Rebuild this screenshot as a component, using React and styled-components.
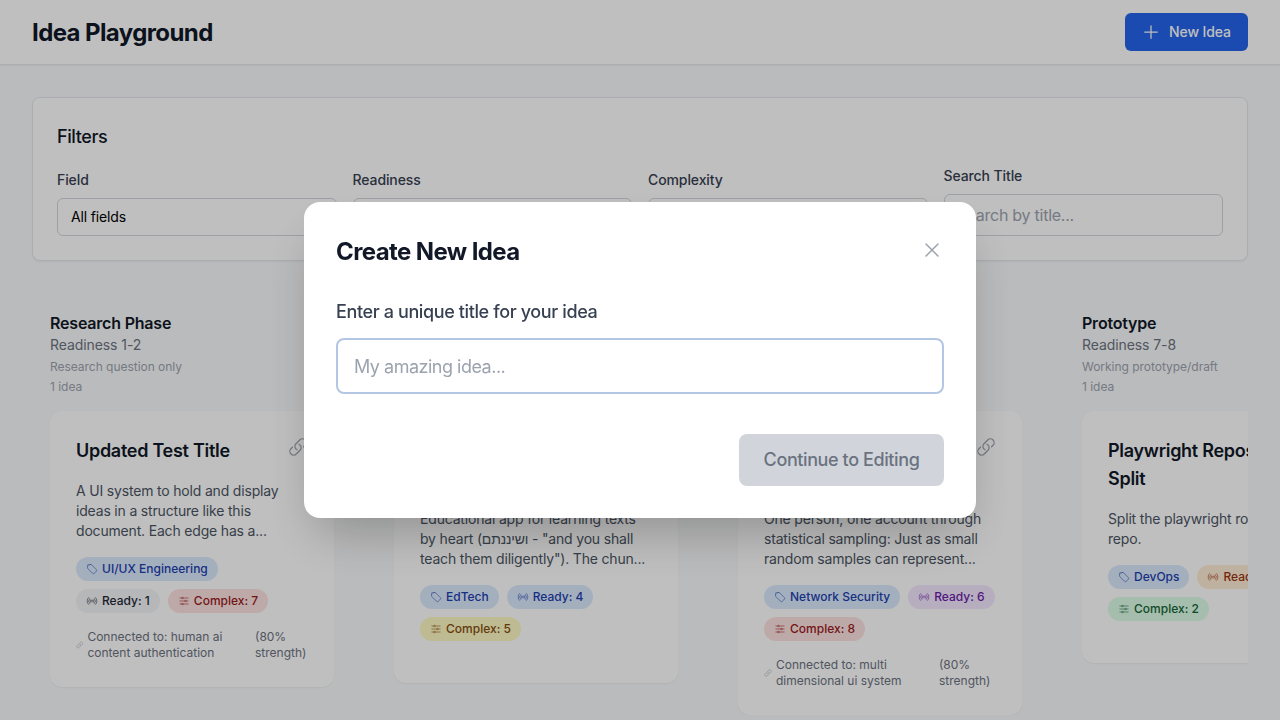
import React from 'react'
import styled, { createGlobalStyle } from 'styled-components'
import {
  HiOutlinePlus,
  HiOutlineXMark,
  HiOutlineLink,
  HiOutlineTag,
  HiOutlineSignal,
  HiOutlineAdjustmentsHorizontal,
} from 'react-icons/hi2'

const GlobalStyle = createGlobalStyle`
  * { box-sizing: border-box; }
  html, body { margin: 0; height: 100%; }
  body {
    background: #f9fafb;
    color: #111827;
    font-family: Inter, "Liberation Sans", sans-serif;
    overflow: hidden;
  }
`

const chipColors = {
  blue: ['#dbeafe', '#1e40af'],
  gray: ['#f3f4f6', '#1f2937'],
  red: ['#fee2e2', '#991b1b'],
  yellow: ['#fef9c3', '#854d0e'],
  purple: ['#f3e8ff', '#6b21a8'],
  orange: ['#ffedd5', '#9a3412'],
  green: ['#dcfce7', '#166534'],
}

const Header = styled.header`
  height: 65px;
  padding: 0 32px;
  display: flex;
  align-items: center;
  justify-content: space-between;
  background: #fff;
  border-bottom: 1px solid #e5e7eb;
  box-shadow: 0 1px 2px rgba(0, 0, 0, 0.05);
`
const AppTitle = styled.h1`
  margin: 0;
  padding-top: 2px;
  font-size: 24px;
  line-height: 32px;
  font-weight: 700;
  letter-spacing: -0.6px;
  color: #111827;
`
const NewButton = styled.button`
  width: 123px;
  height: 38px;
  padding: 0 16px;
  display: flex;
  align-items: center;
  gap: 8px;
  border: 0;
  border-radius: 6px;
  background: #2563eb;
  color: #fff;
  font: 500 14px/20px Inter, sans-serif;
  letter-spacing: -0.1px;
`
const Main = styled.main`
  padding: 32px 32px 0;
`
const FilterCard = styled.section`
  padding: 24px;
  background: #fff;
  border: 1px solid #e5e7eb;
  border-radius: 8px;
  box-shadow: 0 1px 2px rgba(0, 0, 0, 0.05);
`
const FilterTitle = styled.h2`
  margin: 0 0 15px;
  padding-top: 1px;
  font-size: 18px;
  line-height: 28px;
  font-weight: 500;
  letter-spacing: -0.4px;
  color: #111827;
`
const FilterGrid = styled.div`
  display: grid;
  grid-template-columns: repeat(4, 1fr);
  gap: 16px;
  align-items: end;
`
const FieldLabel = styled.label`
  display: block;
  margin-bottom: 8px;
  font-size: 14px;
  line-height: 20px;
  font-weight: 500;
  letter-spacing: -0.1px;
  color: #374151;
`
const Select = styled.select`
  display: block;
  width: 100%;
  height: 38px;
  padding: 0 13px;
  appearance: none;
  background: #fff;
  border: 1px solid #d1d5db;
  border-radius: 6px;
  color: #000;
  font: 400 14px/20px Inter, sans-serif;
  letter-spacing: -0.15px;
`
const SearchInput = styled.input`
  display: block;
  width: 100%;
  height: 42px;
  padding: 0 12px;
  background: #fff;
  border: 1px solid #d1d5db;
  border-radius: 6px;
  font: 400 16px/24px Inter, sans-serif;
  letter-spacing: -0.25px;
  &::placeholder { color: #9ca3af; opacity: 1; }
`
const Board = styled.div`
  display: flex;
  align-items: flex-start;
  gap: 60px;
  margin-top: 32px;
  padding: 18px 0 0 18px;
  overflow: hidden;
`
const Column = styled.div`
  flex: 0 0 284px;
`
const ColumnHead = styled.div`
  margin-bottom: 16px;
`
const ColumnTitle = styled.h3`
  margin: 0;
  font-size: 16px;
  line-height: 24px;
  font-weight: 600;
  letter-spacing: -0.2px;
  color: #111827;
`
const ColumnRange = styled.div`
  font-size: 14px;
  line-height: 20px;
  letter-spacing: -0.08px;
  color: #6b7280;
`
const ColumnNote = styled.div`
  margin-top: 4px;
  font-size: 12px;
  line-height: 16px;
  letter-spacing: -0.03px;
  color: #9ca3af;
`
const Card = styled.article`
  padding: 26px;
  background: #fff;
  border-radius: 12px;
  box-shadow: 0 1px 2px rgba(0, 0, 0, 0.05);
`
const CardTop = styled.div`
  display: flex;
  justify-content: space-between;
  align-items: flex-start;
  gap: 8px;
  margin-bottom: 16px;
`
const CardTitle = styled.h4`
  margin: 0;
  font-size: 18px;
  line-height: 28px;
  font-weight: 600;
  letter-spacing: -0.28px;
  color: #111827;
`
const CardLink = styled(HiOutlineLink)`
  flex: 0 0 20px;
  width: 20px;
  height: 20px;
  color: #9ca3af;
`
const CardText = styled.p`
  margin: 0 0 16px;
  font-size: 14px;
  line-height: 20px;
  letter-spacing: -0.18px;
  color: #4b5563;
`
const Chips = styled.div`
  display: flex;
  flex-wrap: wrap;
  gap: 8px;
  margin-bottom: 16px;
`
const Chip = styled.span`
  display: inline-flex;
  align-items: center;
  gap: 4px;
  height: 24px;
  padding: 0 10px;
  border-radius: 999px;
  background: ${props => chipColors[props.$tone][0]};
  color: ${props => chipColors[props.$tone][1]};
  font-size: 12px;
  line-height: 16px;
  font-weight: 500;
  white-space: nowrap;
  svg { width: 12px; height: 12px; flex: none; opacity: 0.7; }
`
const Connection = styled.div`
  display: flex;
  align-items: center;
  gap: 4px;
  font-size: 12px;
  line-height: 16px;
  color: #6b7280;
  svg { width: 12px; height: 12px; color: #9ca3af; }
`
const Overlay = styled.div`
  position: fixed;
  inset: 0;
  display: flex;
  align-items: center;
  justify-content: center;
  background: rgba(0, 0, 0, 0.25);
`
const Modal = styled.div`
  width: 672px;
  height: 316px;
  padding: 32px;
  background: #fff;
  border-radius: 16px;
  box-shadow: 0 25px 50px -12px rgba(0, 0, 0, 0.25);
`
const ModalHead = styled.div`
  display: flex;
  align-items: flex-start;
  justify-content: space-between;
  margin-bottom: 30px;
`
const ModalTitle = styled.h2`
  margin: 0;
  padding-top: 2px;
  font-size: 24px;
  line-height: 32px;
  font-weight: 700;
  letter-spacing: -0.6px;
  color: #111827;
`
const CloseButton = styled.button`
  display: flex;
  margin-top: 4px;
  padding: 0;
  border: 0;
  background: none;
  color: #9ca3af;
  svg { width: 24px; height: 24px; }
`
const ModalLabel = styled.label`
  display: block;
  margin-bottom: 12px;
  font-size: 18px;
  line-height: 28px;
  font-weight: 500;
  letter-spacing: -0.38px;
  color: #374151;
`
const TitleInput = styled.input`
  display: block;
  width: 100%;
  height: 56px;
  padding: 0 16px;
  border: 2px solid #b3c6e4;
  border-radius: 8px;
  background: #fff;
  outline: none;
  font: 400 18px/28px Inter, sans-serif;
  letter-spacing: -0.5px;
  &::placeholder { color: #9ca3af; opacity: 1; }
`
const ModalFoot = styled.div`
  display: flex;
  justify-content: flex-end;
  margin-top: 40px;
`
const ContinueButton = styled.button`
  width: 205px;
  height: 52px;
  padding: 0;
  border: 0;
  border-radius: 8px;
  background: #d1d5db;
  color: #6b7280;
  font: 500 18px/28px Inter, sans-serif;
  letter-spacing: -0.4px;
`

const columns = [
  {
    title: 'Research Phase', range: 'Readiness 1-2', note: 'Research question only',
    card: {
      title: 'Updated Test Title',
      text: 'A UI system to hold and display ideas in a structure like this document. Each edge has a...',
      field: 'UI/UX Engineering', ready: ['gray', 1], complex: ['red', 7],
      connection: 'human ai content authentication',
    },
  },
  {
    title: 'Concept Draft', range: 'Readiness 3-4', note: 'Outline and rough notes',
    card: {
      title: 'Shinantam: Memorize Texts by Heart',
      text: 'Educational app for learning texts by heart (ושיננתם - "and you shall teach them diligently"). The chun...',
      field: 'EdTech', ready: ['blue', 4], complex: ['yellow', 5],
    },
  },
  {
    title: 'Development', range: 'Readiness 5-6', note: 'Detailed design in progress',
    card: {
      title: 'Fair Voting Through Random Sampling',
      text: 'One person, one account through statistical sampling: Just as small random samples can represent...',
      field: 'Network Security', ready: ['purple', 6], complex: ['red', 8],
      connection: 'multi dimensional ui system',
    },
  },
  {
    title: 'Prototype', range: 'Readiness 7-8', note: 'Working prototype/draft',
    card: {
      title: 'Playwright Repository Split',
      text: 'Split the playwright roles to own repo.',
      field: 'DevOps', ready: ['orange', 7], complex: ['green', 2],
    },
  },
]

const IdeaCard = ({ card }) => (
  <Card>
    <CardTop>
      <CardTitle>{card.title}</CardTitle>
      <CardLink />
    </CardTop>
    <CardText>{card.text}</CardText>
    <Chips>
      <Chip $tone="blue"><HiOutlineTag />{card.field}</Chip>
      <Chip $tone={card.ready[0]}><HiOutlineSignal />Ready: {card.ready[1]}</Chip>
      <Chip $tone={card.complex[0]}><HiOutlineAdjustmentsHorizontal />Complex: {card.complex[1]}</Chip>
    </Chips>
    {card.connection && (
      <Connection>
        <HiOutlineLink />
        <span>Connected to: {card.connection}</span>
        <span>(80% strength)</span>
      </Connection>
    )}
  </Card>
)

export default function App() {
  return (
    <>
      <GlobalStyle />
      <Header>
        <AppTitle>Idea Playground</AppTitle>
        <NewButton><HiOutlinePlus size={20} />New Idea</NewButton>
      </Header>
      <Main>
        <FilterCard>
          <FilterTitle>Filters</FilterTitle>
          <FilterGrid>
            <div>
              <FieldLabel>Field</FieldLabel>
              <Select><option>All fields</option></Select>
            </div>
            <div>
              <FieldLabel>Readiness</FieldLabel>
              <Select><option>All levels</option></Select>
            </div>
            <div>
              <FieldLabel>Complexity</FieldLabel>
              <Select><option>All levels</option></Select>
            </div>
            <div>
              <FieldLabel>Search Title</FieldLabel>
              <SearchInput placeholder="Search by title..." />
            </div>
          </FilterGrid>
        </FilterCard>
        <Board>
          {columns.map(column => (
            <Column key={column.title}>
              <ColumnHead>
                <ColumnTitle>{column.title}</ColumnTitle>
                <ColumnRange>{column.range}</ColumnRange>
                <ColumnNote>{column.note}</ColumnNote>
                <ColumnNote>1 idea</ColumnNote>
              </ColumnHead>
              <IdeaCard card={column.card} />
            </Column>
          ))}
        </Board>
      </Main>
      <Overlay>
        <Modal>
          <ModalHead>
            <ModalTitle>Create New Idea</ModalTitle>
            <CloseButton><HiOutlineXMark /></CloseButton>
          </ModalHead>
          <ModalLabel>Enter a unique title for your idea</ModalLabel>
          <TitleInput placeholder="My amazing idea..." />
          <ModalFoot>
            <ContinueButton>Continue to Editing</ContinueButton>
          </ModalFoot>
        </Modal>
      </Overlay>
    </>
  )
}
